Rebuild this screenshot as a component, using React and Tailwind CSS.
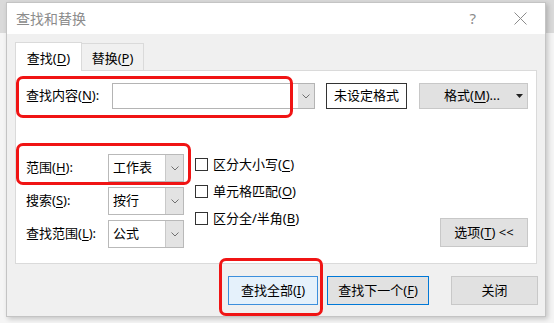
import React from 'react';

function Chevron() {
  return (
    <svg width="8" height="5" viewBox="0 0 8 5" fill="none">
      <path d="M0.5 0.5 L4 4 L7.5 0.5" stroke="#707070" strokeWidth="1" />
    </svg>
  );
}

function Select({ value }) {
  return (
    <div className="w-[76px] h-[28px] border border-[#b9b9b9] bg-white flex">
      <div className="flex-1 flex items-center pl-[4px]">{value}</div>
      <div className="w-[18px] bg-[#e3e3e3] border-l border-[#c9c9c9] flex items-center justify-center">
        <Chevron />
      </div>
    </div>
  );
}

function Check({ label, k }) {
  return (
    <div className="h-[27px] flex items-center">
      <div className="w-[13px] h-[13px] border border-[#333] bg-white" />
      <span className="ml-[5px]">
        {label}(<u className="underline-offset-2">{k}</u>)
      </span>
    </div>
  );
}

export default function App() {
  return (
    <div className="w-[554px] h-[323px] relative overflow-hidden text-[13px] text-black bg-[linear-gradient(to_bottom,#dadada_0,#dadada_33px,#f5f5f5_33px)] [font-family:'Noto_Sans','Noto_Sans_CJK_SC',sans-serif]">
      {/* dialog */}
      <div className="ml-[6px] mt-[2px] w-[540px] h-[315px] border border-[#c4c4c4] bg-[#f0f0f0] flex flex-col shadow-[2px_2px_5px_rgba(0,0,0,0.2)]">
        <div className="h-[31px] bg-white flex items-center pl-[9px]">
          <span className="text-[14px] text-[#8c8c8c]">查找和替换</span>
          <span className="ml-auto text-[15px] text-[#8c8c8c] mr-[38px]">?</span>
          <svg width="13" height="13" viewBox="0 0 13 13" className="mr-[18px]">
            <path d="M0.5 0.5 L12.5 12.5 M12.5 0.5 L0.5 12.5" stroke="#8c8c8c" strokeWidth="1" />
          </svg>
        </div>

        <div className="flex-1 px-[8px] pt-[8px] flex flex-col">
          {/* tabs */}
          <div className="flex items-end h-[28px]">
            <div className="w-[67px] h-[29px] bg-white border border-[#dadada] border-b-0 -mb-[1px] relative z-10 flex items-center justify-center pt-[4px]">
              查找(<u className="underline-offset-2">D</u>)
            </div>
            <div className="w-[62px] h-[27px] bg-[#f0f0f0] border border-[#dadada] border-l-0 border-b-0 flex items-center justify-center pt-[3px]">
              替换(<u className="underline-offset-2">P</u>)
            </div>
          </div>

          {/* panel */}
          <div className="h-[194px] border border-[#dadada] bg-white flex flex-col">
            <div className="mt-[12px] pl-[10px] flex items-center">
              <div className="w-[86px]">
                查找内容(<u className="underline-offset-2">N</u>):
              </div>
              <div className="w-[203px] h-[26px] border border-[#b4b4b4] bg-white flex">
                <div className="flex-1" />
                <div className="w-[16px] bg-[#e3e3e3] flex items-center justify-center">
                  <Chevron />
                </div>
              </div>
              <div className="ml-[11px] w-[81px] h-[26px] border border-[#333] bg-white flex items-center justify-center">
                未设定格式
              </div>
              <div className="ml-[12px] w-[109px] h-[26px] border border-[#c8c8c8] bg-[#e1e1e1] flex items-center pl-[24px] pr-[4px]">
                <span>
                  格式(<u className="underline-offset-2">M</u>)...
                </span>
                <svg width="7" height="4" viewBox="0 0 7 4" className="ml-auto">
                  <path d="M0 0 L7 0 L3.5 4 Z" fill="#222" />
                </svg>
              </div>
            </div>

            <div className="mt-[45px] pl-[10px] flex">
              <div className="flex flex-col gap-[5px]">
                <div className="flex items-center">
                  <div className="w-[82px]">
                    范围(<u className="underline-offset-2">H</u>):
                  </div>
                  <Select value="工作表" />
                </div>
                <div className="flex items-center">
                  <div className="w-[82px]">
                    搜索(<u className="underline-offset-2">S</u>):
                  </div>
                  <Select value="按行" />
                </div>
                <div className="flex items-center">
                  <div className="w-[82px]">
                    查找范围(<u className="underline-offset-2">L</u>):
                  </div>
                  <Select value="公式" />
                </div>
              </div>

              <div className="ml-[11px] -mt-[3px] flex flex-col">
                <Check label="区分大小写" k="C" />
                <Check label="单元格匹配" k="O" />
                <Check label="区分全/半角" k="B" />
              </div>

              <div className="flex-1 flex items-end justify-end pr-[8px]">
                <div className="w-[88px] h-[29px] mb-[1px] border border-[#c8c8c8] bg-[#e1e1e1] flex items-center justify-center">
                  选项(<u className="underline-offset-2">T</u>)&nbsp;&lt;&lt;
                </div>
              </div>
            </div>
          </div>

          {/* bottom buttons */}
          <div className="mt-[12px] -mr-[1px] flex justify-end">
            <div className="w-[90px] h-[29px] border border-[#3d8fdc] bg-[#e5f1fb] flex items-center justify-center">
              查找全部(<u className="underline-offset-2">I</u>)
            </div>
            <div className="ml-[9px] w-[102px] h-[29px] border border-[#0078d7] bg-[#e1e1e1] flex items-center justify-center">
              查找下一个(<u className="underline-offset-2">F</u>)
            </div>
            <div className="ml-[22px] w-[87px] h-[29px] border border-[#c8c8c8] bg-[#e1e1e1] flex items-center justify-center">
              关闭
            </div>
          </div>
        </div>
      </div>

      {/* red annotation boxes */}
      <div className="absolute left-[16px] top-[76px] w-[277px] h-[42px] border-[3px] border-[#f01414] rounded-[7px]" />
      <div className="absolute left-[16px] top-[143px] w-[175px] h-[42px] border-[3px] border-[#f01414] rounded-[7px]" />
      <div className="absolute left-[219px] top-[258px] w-[104px] h-[58px] border-[3px] border-[#f01414] rounded-[7px]" />
    </div>
  );
}
